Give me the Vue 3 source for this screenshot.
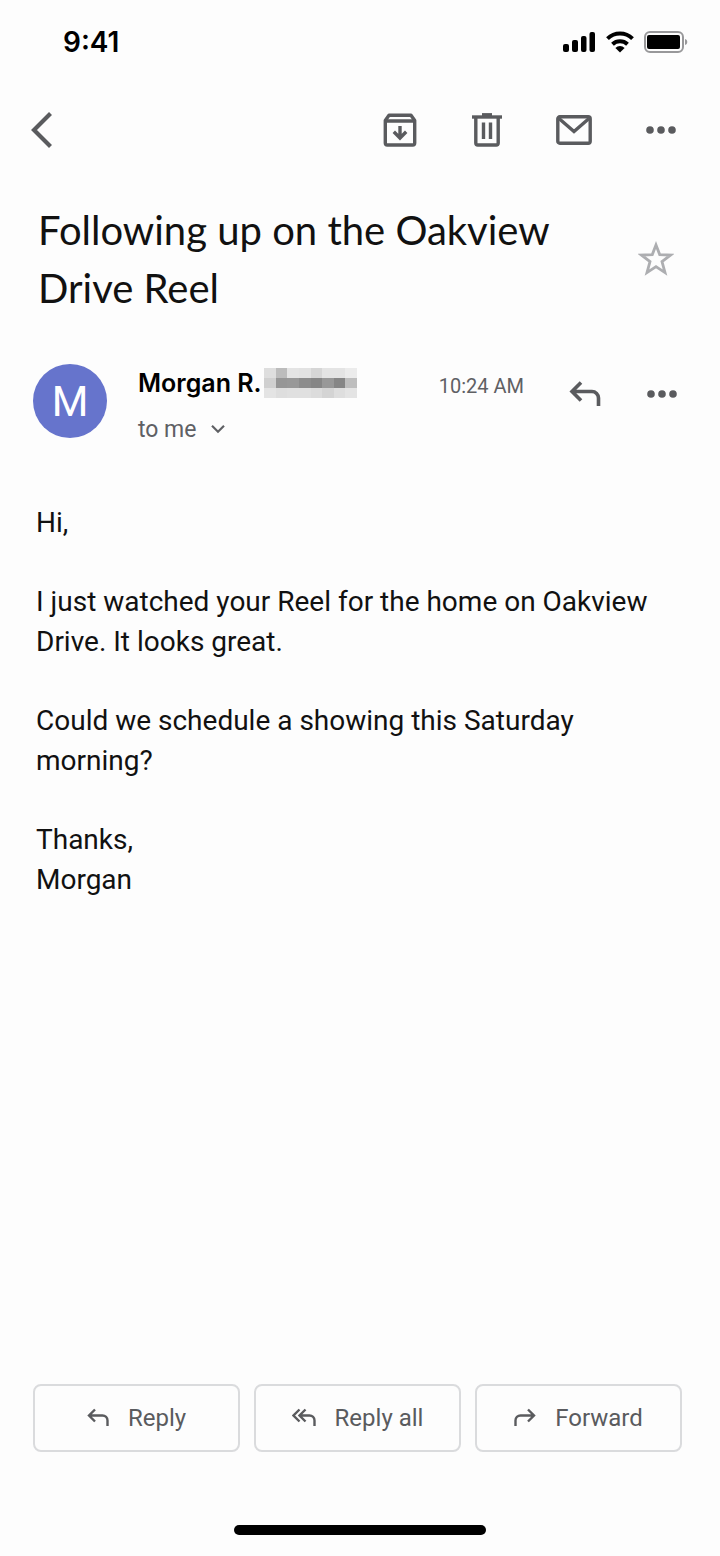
<template>
  <div class="screen">
    <header class="status-bar">
      <span class="clock">9:41</span>
      <div class="status-icons">
        <svg width="33" height="22" viewBox="0 0 33 22" aria-hidden="true">
          <rect x="0" y="13" width="6" height="8" rx="2" />
          <rect x="9" y="9" width="6" height="12" rx="2" />
          <rect x="18" y="5" width="5.500" height="16" rx="2" />
          <rect x="26.500" y="1" width="5.500" height="20" rx="2" />
        </svg>
        <svg width="28" height="22" viewBox="0 0 28 22" aria-hidden="true">
          <g fill="none" stroke="#000" stroke-width="4">
            <path d="M1.5 7.6a18 18 0 0 1 25 0" />
            <path d="M6.5 13.2a11 11 0 0 1 15 0" />
          </g>
          <path d="M14 21.5l-4.6-4.6a6.6 6.6 0 0 1 9.2 0z" />
        </svg>
        <svg width="44" height="22" viewBox="0 0 44 22" aria-hidden="true">
          <rect x="1" y="1" width="38" height="20" rx="5" fill="none" stroke="#98989a" stroke-width="2" />
          <rect x="3" y="4" width="33" height="14" rx="2" />
          <path d="M41 8c3 .6 3 5.400 0 6z" fill="#98989a" />
        </svg>
      </div>
    </header>

    <nav class="toolbar">
      <button class="icon-btn back" type="button" aria-label="Back">
        <svg width="22" height="38" viewBox="0 0 22 38">
          <path d="M19.500 2.500L3 19l16.500 16.500" fill="none" stroke="#5a5b5e" stroke-width="4.200" />
        </svg>
      </button>
      <button class="icon-btn" type="button" aria-label="Archive">
        <svg width="34" height="34" viewBox="0 0 34 34" fill="none" stroke="#5a5b5e" stroke-width="3.400" stroke-linejoin="round">
          <path d="M2.300 7.500L6 2.200h22l3.700 5.300V30a2 2 0 0 1-2 2H4.300a2 2 0 0 1-2-2z" />
          <path d="M2.300 8h29.400M17 13v11M10.800 18.800l6.200 6.200 6.200-6.200" stroke-linejoin="miter" />
        </svg>
      </button>
      <button class="icon-btn" type="button" aria-label="Delete">
        <svg width="32" height="34" viewBox="0 0 32 34" fill="none" stroke="#5a5b5e" stroke-width="3.400">
          <path d="M1 4h30" />
          <path d="M11 1.800h10" />
          <path d="M4.800 4v26a2 2 0 0 0 2 2h18.400a2 2 0 0 0 2-2V4" />
          <path d="M12.500 9.500v16.500M19.500 9.500v16.500" />
        </svg>
      </button>
      <button class="icon-btn" type="button" aria-label="Mark as unread">
        <svg width="36" height="30" viewBox="0 0 36 30" fill="none" stroke="#5a5b5e" stroke-width="3.400">
          <rect x="1.800" y="1.800" width="32.400" height="26.400" rx="2" />
          <path d="M3 3.500l15 13L33 3.500" />
        </svg>
      </button>
      <button class="icon-btn" type="button" aria-label="More options">
        <svg width="30" height="8" viewBox="0 0 30 8" fill="#5a5b5e">
          <circle v-for="x in dots" :key="x" :cx="x" cy="4" r="3.800" />
        </svg>
      </button>
    </nav>

    <section class="subject">
      <h1>Following up on the Oakview Drive Reel</h1>
      <button class="icon-btn star" type="button" aria-label="Star">
        <svg width="36" height="36" viewBox="0 0 36 36">
          <path
            d="M18 4l3.700 9.600 10.800.5-8.500 6.500 3 11L18 25.700l-9 5.900 3-11-8.500-6.500 10.800-.5z"
            fill="none" stroke="#adaeb1" stroke-width="2.800"
          />
        </svg>
      </button>
    </section>

    <section class="sender">
      <div class="avatar">M</div>
      <div class="sender-info">
        <div class="name">
          <span>Morgan R.</span>
          <svg width="93" height="30" viewBox="0 0 8 3" preserveAspectRatio="none" shape-rendering="crispEdges" aria-hidden="true">
            <rect v-for="(c, i) in mosaic" :key="i" :x="i % 8" :y="Math.floor(i / 8)" width="1" height="1" :fill="c" />
          </svg>
        </div>
        <button class="recipient" type="button">
          <span>to me</span>
          <svg width="14" height="10" viewBox="0 0 14 10">
            <path d="M1 1.800l6 6 6-6" fill="none" stroke="#5f6064" stroke-width="2.200" />
          </svg>
        </button>
      </div>
      <time>10:24 AM</time>
      <div class="sender-actions">
        <button class="icon-btn" type="button" aria-label="Reply">
          <svg width="32" height="26" viewBox="0 0 32 26" fill="none" stroke="#5a5b5e" stroke-width="3.600">
            <path d="M12 1.500L3 10.500l9 9M3 10.500h20a6.500 6.500 0 0 1 6.500 6.500v8" />
          </svg>
        </button>
        <button class="icon-btn" type="button" aria-label="Message options">
          <svg width="30" height="8" viewBox="0 0 30 8" fill="#5a5b5e">
            <circle v-for="x in dots" :key="x" :cx="x" cy="4" r="3.800" />
          </svg>
        </button>
      </div>
    </section>

    <main class="message">
      <p>Hi,</p>
      <p>I just watched your Reel for the home on Oakview Drive. It looks great.</p>
      <p>Could we schedule a showing this Saturday morning?</p>
      <p>Thanks,<br />Morgan</p>
    </main>

    <footer class="actions">
      <button v-for="a in actions" :key="a.label" class="action" type="button">
        <svg :width="a.width" height="20" :viewBox="`0 0 ${a.width} 20`" fill="none" stroke="#5a5b5e" stroke-width="2.400">
          <path :d="a.path" />
        </svg>
        <span>{{ a.label }}</span>
      </button>
    </footer>

    <div class="home-indicator"></div>
  </div>
</template>

<script setup>
const dots = [4, 15, 26]

// pixelated surname, 8 columns x 3 rows
const mosaic = [
  '#dedede', '#bcbcbc', '#e4e4e4', '#e2e2e2', '#d6d6d6', '#e4e4e4', '#e4e4e4', '#ececec',
  '#d0d0d0', '#969696', '#989898', '#8c8c8c', '#868686', '#989898', '#868686', '#bebebe',
  '#e4e4e4', '#dedede', '#e0e0e0', '#e0e0e0', '#dcdcdc', '#d4d4d4', '#dedede', '#e4e4e4'
]

const actions = [
  { label: 'Reply', width: 22, path: 'M8 1.500L2 7.500l6 6M2 7.500h13.500a5 5 0 0 1 5 5V18' },
  { label: 'Reply all', width: 24, path: 'M7.500 1.500l-6 6 6 6M13.500 1.500l-6 6 6 6M7.500 7.500h10a5 5 0 0 1 5 5V18' },
  { label: 'Forward', width: 22, path: 'M14 1.500l6 6-6 6M20 7.500H6.500a5 5 0 0 0-5 5V18' }
]
</script>

<style>
body {
  margin: 0;
  background: #fdfdfd;
}
</style>

<style scoped>
.screen {
  display: flex;
  flex-direction: column;
  min-height: 100vh;
  box-sizing: border-box;
  background: #fdfdfd;
  color: #111;
  font-family: Roboto, "Liberation Sans", sans-serif;
}

button {
  margin: 0;
  padding: 0;
  border: 0;
  background: none;
  font: inherit;
  color: inherit;
  cursor: pointer;
}

svg {
  display: block;
  flex-shrink: 0;
}

.status-bar {
  display: flex;
  align-items: center;
  justify-content: space-between;
  height: 84px;
  padding: 0 32px 0 63px;
}

.clock {
  font-family: Inter, sans-serif;
  font-size: 28px;
  font-weight: 600;
  color: #000;
}

.status-icons {
  display: flex;
  align-items: center;
  gap: 10px;
}

.toolbar {
  display: flex;
  align-items: center;
  gap: 47px;
  height: 92px;
  padding: 0 39px 0 31px;
}

.icon-btn {
  display: flex;
  align-items: center;
  justify-content: center;
  flex-shrink: 0;
  width: 40px;
  height: 40px;
}

.back {
  justify-content: flex-start;
  margin-right: auto;
}

.subject {
  display: flex;
  align-items: center;
  justify-content: space-between;
  padding: 25px 40px 0 38px;
}

h1 {
  max-width: 540px;
  margin: 0;
  font-family: Lato, sans-serif;
  font-size: 40px;
  font-weight: 400;
  line-height: 58px;
}

.star {
  width: 48px;
}

.sender {
  display: flex;
  align-items: flex-start;
  padding: 43px 38px 0 33px;
}

.avatar {
  display: flex;
  align-items: center;
  justify-content: center;
  width: 74px;
  height: 74px;
  margin-top: 4px;
  border-radius: 50%;
  background: #6674cc;
  color: #fff;
  font-size: 42px;
}

.sender-info {
  flex: 1;
  margin-left: 31px;
}

.name {
  display: flex;
  align-items: center;
  gap: 2px;
  height: 46px;
  font-family: Inter, sans-serif;
  font-size: 25px;
  font-weight: 600;
  color: #000;
}

.recipient {
  display: flex;
  align-items: center;
  gap: 14px;
  height: 46px;
  font-size: 23px;
  color: #5f6064;
}

time {
  margin-right: 41px;
  font-size: 20px;
  line-height: 52px;
  color: #5f6064;
}

.sender-actions {
  display: flex;
  gap: 37px;
  padding-top: 14px;
}

.message {
  flex: 1;
  padding: 51px 36px 40px;
  font-size: 28px;
  line-height: 40px;
}

.message p {
  margin: 0 0 39px;
}

.actions {
  display: grid;
  grid-template-columns: repeat(3, 1fr);
  gap: 14px;
  padding: 0 38px 0 33px;
}

.action {
  display: flex;
  align-items: center;
  justify-content: center;
  gap: 19px;
  height: 68px;
  border: 2px solid #dadbdd;
  border-radius: 8px;
  color: #5a5b5e;
  font-size: 24px;
}

.home-indicator {
  width: 35%;
  height: 10px;
  margin: 73px auto 21px;
  border-radius: 5px;
  background: #000;
}
</style>
